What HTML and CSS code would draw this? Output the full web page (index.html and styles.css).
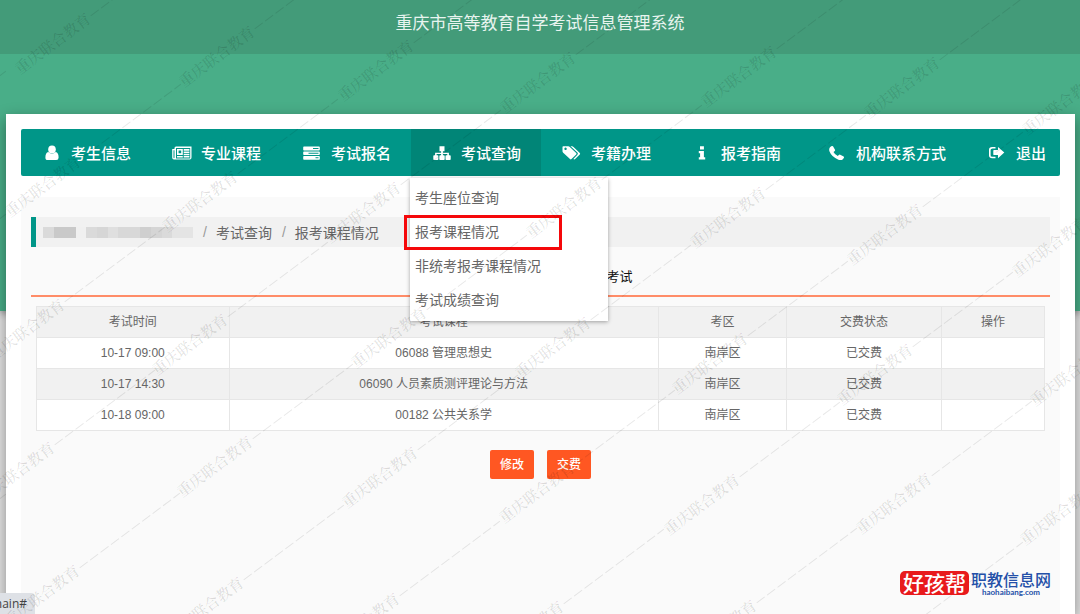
FILE: index.html
```html
<!DOCTYPE html>
<html lang="zh-CN">
<head>
<meta charset="utf-8">
<title>重庆市高等教育自学考试信息管理系统</title>
<link rel="stylesheet" href="styles.css">
</head>
<body>
<div class="page">
  <header class="site-header"><h1 class="site-title">重庆市高等教育自学考试信息管理系统</h1></header>
  <div class="hero"></div>
  <main class="card">
    <nav class="nav">
      <a class="nav-item" href="#"><svg class="icon" viewBox="0 0 18 16"><ellipse cx="9" cy="4.600" rx="3.800" ry="4"/><path d="M5.300 7Q2.400 7.600 2.400 12.400 2.400 15 4.700 15h8.600q2.300 0 2.300-2.600 0-4.800-2.900-5.400Q9 10.600 5.300 7Z"/></svg>考生信息</a>
      <a class="nav-item" href="#"><svg class="icon" viewBox="0 0 18 16"><path fill-rule="evenodd" d="M3 1.500h15.500v11q0 2-1.800 2H1q-1.800 0-1.800-1.800V4H1.500V3q0-1.500 1.500-1.500ZM1.500 5.200H.5v7.300q0 .8.5.8t.5-.8Z"/><path fill="#009688" d="M3 3h14.200v1H3ZM3 12.400h14.200v1H3ZM9.800 4h.9v8.400h-.9ZM3 4h1v8.400H3ZM16.400 4h.8v8.400h-.8ZM10.700 5.700h5.700v.8h-5.700ZM10.700 8h5.700v.8h-5.700ZM10.700 10.300h5.700v.8h-5.700ZM4 10h5.800v.9H4ZM5.600 5.400h2.600v2.800H5.600Z"/></svg>专业课程</a>
      <a class="nav-item" href="#"><svg class="icon" viewBox="0 0 18 16"><path fill-rule="evenodd" d="M1 1.500h15q.8 0 .8.800v2.400q0 .8-.8.800H1q-.8 0-.8-.8V2.300q0-.8.800-.8ZM10 3h5.500v1H10ZM1 6.400h15q.8 0 .8.800v2q0 .8-.8.800H1q-.8 0-.8-.8v-2q0-.8.800-.8ZM5.500 7.700h10v1h-10ZM1 10.900h15q.8 0 .8.800v2.200q0 .8-.8.800H1q-.8 0-.8-.8v-2.200q0-.8.800-.8ZM12.500 12.300h3v1h-3Z"/></svg>考试报名</a>
      <div class="nav-group">
        <a class="nav-item nav-item-active" href="#"><svg class="icon" viewBox="0 0 18 16"><path d="M6.500 1.300h5v4.900H9.900v1.500h6v2.500h1q.8 0 .8.800v3.200q0 .8-.8.800h-3.600q-.8 0-.8-.8V11q0-.8.800-.8h1V9H9.900v1.200h1q.8 0 .8.800v3.200q0 .8-.8.800H7.100q-.8 0-.8-.8V11q0-.8.800-.8h1V9H3.600v1.200h1q.8 0 .8.800v3.200q0 .8-.8.800H1.100q-.8 0-.8-.8V11q0-.8.800-.8h1V7.700h6V6.200H6.500Z"/></svg>考试查询</a>
        <div class="menu">
          <a class="menu-item" href="#">考生座位查询</a>
          <a class="menu-item menu-item-marked" href="#">报考课程情况</a>
          <a class="menu-item" href="#">非统考报考课程情况</a>
          <a class="menu-item" href="#">考试成绩查询</a>
        </div>
      </div>
      <a class="nav-item" href="#"><svg class="icon" viewBox="0 0 18 16"><path fill-rule="evenodd" d="M-.5 2q0-.8.800-.8h5q.8 0 1.500.7l6.400 6q.7.700 0 1.500l-4.700 4.700q-.8.700-1.500 0L.2 7.700q-.7-.6-.7-1.500ZM2.500 2.600a1.200 1.200 0 1 0 .1 0Z"/><path d="M7.500 1.200h1.500q.8 0 1.500.7l6.300 6q.7.700 0 1.500l-4.700 4.700q-.9.800-1.700 0l4-4.400q1-1.100 0-2.200Z"/></svg>考籍办理</a>
      <a class="nav-item" href="#"><svg class="icon" viewBox="0 0 18 16"><path d="M7 1.200h3.900v3.200H7ZM5.800 6h5.100v6.200h1.300v2.400H5.800v-2.400h1.300V8.300H5.800Z"/></svg>报考指南</a>
      <a class="nav-item nav-item-right" href="#"><svg class="icon" viewBox="0 0 18 16"><path d="M1.800 2.500Q3.900.5 5 1.300L7 4.700q.5.900-.5 1.500L5.500 7q1.500 2.800 4.300 4.100l1-1.100q.6-.6 1.400-.3l3.500 1.900q1.200.9-.8 2.600-1.800 1.500-4.500.5Q3.500 12 1.300 6.100.8 3.900 1.800 2.500Z"/></svg>机构联系方式</a>
      <a class="nav-item nav-item-last" href="#"><svg class="icon" viewBox="0 0 18 16"><path d="M7.500 2H4.200Q1 2 1 4.700v5.800q0 2.800 3.200 2.800h3.300v-1.500H4.600Q2.600 11.800 2.600 10.300V5q0-1.500 2-1.500h2.900Z"/><path d="M10 2 16.300 7.600 10 13.200V10.100H6q-.7 0-.7-.7V5.800q0-.7.700-.7h4Z"/></svg>退出</a>
    </nav>
    <section class="content">
      <div class="breadcrumb">
        <span class="masked"></span>
        <span class="slash">/</span><a class="crumb" href="#">考试查询</a><span class="slash">/</span><span class="crumb">报考课程情况</span>
      </div>
      <h2 class="exam-title">考试</h2>
      <div class="table-wrap">
        <table class="table">
          <colgroup><col class="col-time"><col class="col-course"><col class="col-area"><col class="col-state"><col class="col-action"></colgroup>
          <thead><tr><th>考试时间</th><th>考试课程</th><th>考区</th><th>交费状态</th><th>操作</th></tr></thead>
          <tbody>
            <tr><td>10-17 09:00</td><td>06088 管理思想史</td><td>南岸区</td><td>已交费</td><td></td></tr>
            <tr><td>10-17 14:30</td><td>06090 人员素质测评理论与方法</td><td>南岸区</td><td>已交费</td><td></td></tr>
            <tr><td>10-18 09:00</td><td>00182 公共关系学</td><td>南岸区</td><td>已交费</td><td></td></tr>
          </tbody>
        </table>
      </div>
      <div class="actions"><button class="btn" type="button">修改</button><button class="btn" type="button">交费</button></div>
    </section>
  </main>
</div>
<svg class="watermark" id="watermark"></svg>
<div class="status">main#</div>
<div class="brand">
  <span class="brand-badge">好孩帮</span>
  <span class="brand-text"><span class="brand-name">职教信息网</span><span class="brand-url">haohaibang.com</span></span>
</div>
<script src="watermark.js"></script>
</body>
</html>
```
FILE: styles.css
```css
* { box-sizing: border-box; }
body {
  margin: 0;
  background: #e4e4e4;
  color: #666;
  font-family: "Liberation Sans", "Noto Sans CJK SC", sans-serif;
  font-size: 14px;
  overflow: hidden;
}
a { color: inherit; text-decoration: none; }
.page { display: flex; flex-direction: column; min-height: 100vh; }
.site-header {
  position: relative;
  height: 54px;
  padding-top: 12px;
  background: #439b79;
  text-align: center;
}
.site-title { margin: 0; color: #e8f4ef; font-size: 17px; font-weight: 400; line-height: 24px; }
.hero {
  height: 257px;
  margin-bottom: -197px;
  background: #49ae88;
  box-shadow: 0 2px 8px rgba(0, 0, 0, .4);
}
.card {
  position: relative;
  flex: 1;
  display: flex;
  flex-direction: column;
  margin: 0 5px 0 6px;
  padding: 15px 15px 0;
  background: #fff;
  box-shadow: 0 5px 14px rgba(0, 0, 0, .4);
}
.nav {
  display: flex;
  height: 47px;
  border-radius: 2px;
  background: #009688;
  color: #fff;
  font-size: 15px;
  font-weight: 500;
}
.nav-item {
  display: flex;
  align-items: center;
  gap: 10px;
  height: 100%;
  padding: 0 20px 0 22px;
  white-space: nowrap;
}
.nav-item-active { background: #018577; }
.nav-item-right { margin-left: auto; }
.nav-item-last { padding-right: 14px; }
.icon { width: 18px; height: 16px; fill: #fff; overflow: visible; }
.nav-group { position: relative; }
.menu {
  position: absolute;
  z-index: 2;
  top: 49px;
  left: -1px;
  width: 198px;
  padding: 3px 0 4px;
  background: #fff;
  box-shadow: 0 1px 4px rgba(0, 0, 0, .35);
  color: #666;
  font-size: 14px;
  font-weight: 400;
}
.menu-item { display: block; padding: 0 5px; line-height: 34px; }
.menu-item-marked { position: relative; }
.menu-item-marked::after {
  content: "";
  position: absolute;
  inset: 0 46px -1px -6px;
  border: 3px solid #f5080a;
}
.content { flex: 1; margin-top: 21px; padding: 20px 10px; background: #fafafa; }
.breadcrumb {
  display: flex;
  align-items: center;
  height: 30px;
  padding-left: 7px;
  border-left: 5px solid #009688;
  background: #f1f1f1;
}
.masked {
  width: 150px;
  height: 11px;
  background: linear-gradient(90deg, #dadada 0 11px, #c9c9c9 11px 33px, #f0f0f0 33px 43px, #dadada 43px 54px, #d6d6d6 54px 65px, #dfdfdf 65px 75px, #d8d8d8 75px 97px, #cfcfcf 97px 108px, #d5d5d5 108px 119px, #dadada 119px 129px, #e4e4e4 129px);
}
.slash { margin: 0 9px 0 10px; color: #999; }
.exam-title {
  margin: 16px 0 0;
  padding: 0 0 5px 158px;
  border-bottom: 2px solid #ff8c68;
  color: #111;
  font-size: 13px;
  font-weight: 400;
  line-height: 27px;
  text-align: center;
}
.table-wrap { padding: 9px 5px 0; }
.table {
  width: 100%;
  border-collapse: collapse;
  table-layout: fixed;
  background: #fff;
  font-size: 12px;
}
.table th, .table td {
  height: 31px;
  padding: 0;
  border: 1px solid #e6e6e6;
  font-weight: 400;
  line-height: 20px;
  text-align: center;
}
.table th, .table tbody tr:nth-child(even) { background: #f1f1f1; }
.col-time { width: 19.1%; }
.col-course { width: 42.6%; }
.col-area { width: 12.7%; }
.col-state { width: 15.4%; }
.col-action { width: 10.2%; }
.actions { display: flex; justify-content: center; gap: 13px; margin-top: 19px; }
.btn {
  width: 44px;
  height: 29px;
  padding: 0 0 2px;
  border: 0;
  border-radius: 2px;
  background: #ff5722;
  color: #fff;
  font: 500 12px "Noto Sans CJK SC", sans-serif;
}
.watermark { position: absolute; inset: 0; width: 100%; height: 100%; pointer-events: none; z-index: 5; }
.watermark text { fill: #000; fill-opacity: .13; font-family: "Noto Serif CJK SC", "Noto Sans CJK SC", serif; font-size: 15px; font-weight: 500; text-anchor: middle; }
.watermark line { stroke: #000; stroke-opacity: .09; stroke-dasharray: 10 3; }
.status {
  position: absolute;
  z-index: 4;
  left: 0;
  bottom: 0;
  display: flex;
  justify-content: flex-end;
  width: 35px;
  height: 21px;
  padding-right: 8px;
  overflow: hidden;
  border-top-right-radius: 4px;
  background: #dee1e6;
  color: #444;
  font: 12px/22px "Open Sans", sans-serif;
}
.brand {
  position: absolute;
  z-index: 6;
  right: 30px;
  bottom: 18px;
  display: flex;
  gap: 3px;
  height: 25px;
}
.brand-badge {
  width: 69px;
  height: 24px;
  border-radius: 5px;
  background: #e81a1c;
  color: #fff;
  font: 500 21px/23px "Noto Sans CJK SC", sans-serif;
  text-align: center;
}
.brand-text { display: flex; flex-direction: column; align-items: center; width: 78px; color: #2450a8; }
.brand-name { font: 500 16px/16px "Noto Sans CJK SC", sans-serif; white-space: nowrap; }
.brand-url { font: 700 8px/10px Lato, sans-serif; }
```
FILE: watermark.js
```js
const marks = [
  [53, 44], [217, 57], [376, 71], [538, 83], [739, 77], [902, 88], [1060, 105],
  [43, 187], [200, 202], [363, 213], [564, 208], [728, 218], [885, 235], [1050, 247],
  [27, 330], [190, 345], [389, 338], [553, 348], [710, 364], [875, 375], [1068, 376],
  [17, 473], [215, 467], [380, 478], [537, 493], [702, 505], [894, 504], [1058, 515],
  [42, 596], [206, 608], [362, 624], [526, 632], [719, 631], [885, 645],
  [-132, 174], [-132, 317], [-148, 460], [-132, 597]
];
const svg = document.getElementById("watermark");
svg.innerHTML = marks.map(([x, y]) =>
  `<g transform="translate(${x} ${y}) rotate(-36.700)">${x > -60 ? '<text y="5">重庆联合教育</text>' : ""}<line x1="47" x2="172" y1="0" y2="0"/></g>`
).join("");
```
